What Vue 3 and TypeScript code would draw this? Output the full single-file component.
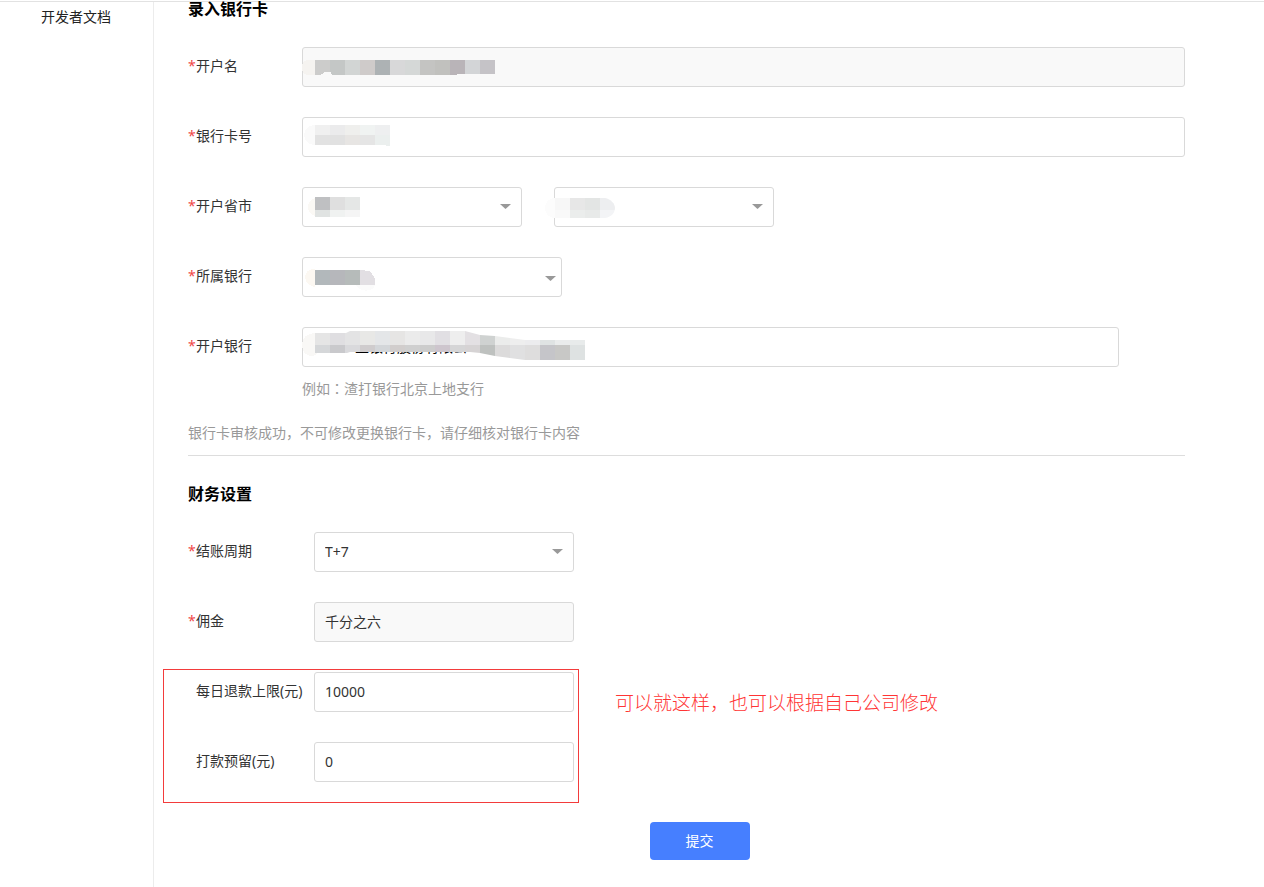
<script setup lang="ts">
import { ref } from 'vue'

interface Cell {
  x: number
  y: number
  w: number
  h: number
  fill: string
}

// Builds one row of 15px mosaic blocks.
function cells(x: number, y: number, h: number, fills: string[]): Cell[] {
  return fills.map((fill, i) => ({ x: x + i * 15, y, w: 15, h, fill }))
}

const holderMosaic = cells(13, 13, 15, [
  '#cccccb', '#c4c7c6', '#d2d5d4', '#cfcbca', '#adb2b4', '#d8d8d9',
  '#d5d8d7', '#c4c4c2', '#c1c1be', '#b9b4b8', '#d3d5d7', '#c5c3c7',
])
const cardMosaic = [
  ...cells(13, 8, 10, ['#f0f0f0', '#ebebec', '#efefed', '#f0f3f2', '#eeeff0']),
  ...cells(13, 18, 10, ['#e2e2e2', '#e1e1e1', '#e7e5e3', '#e5e5e5', '#ebefee']),
]
const provinceMosaic = [
  ...cells(13, 10, 13, ['#bfc0c2', '#dfdfdf', '#e5e7e6']),
  ...cells(13, 23, 7, ['#e0e3e2', '#f0f2f1', '#f5f5f5']),
]
const cityMosaic = [
  ...cells(1, 11, 12, ['#f7f7f7', '#e7e7e7', '#e3e5e4', '#edeef0']),
  ...cells(1, 23, 8, ['#f9f9f9', '#ebedec', '#e8eae9', '#f3f4f6']),
]
const bankMosaic = cells(13, 13, 15, ['#b2b8bb', '#b6b7bb', '#b6bbba'])
const branchMosaic = [
  ...cells(13, 4, 14, [
    '#e5e5e5', '#dfdee1', '#e3e3e4', '#e8e8e6', '#e4e6e8', '#e6e5e4',
    '#ebebeb', '#e8e8e9', '#e1dfe3', '#eeeeee', '#e3e0e3', '#cfd2d1',
    '#ebeceb', '#eeeeee', '#ececee', '#dfe3e3', '#eaecec', '#e8ebeb',
  ]),
  ...cells(13, 18, 15, [
    '#d5d7d9', '#c9c9cc', '#d9d9dc', '#cfcccd', '#d3d6d9', '#d1cdcc',
    '#cfcfcf', '#cccccc', '#cdc5cd', '#d5d5d6', '#d6d3d4', '#bec1bf',
    '#dcdbdb', '#e0e0e1', '#dedddd', '#c5c5c9', '#c8c8c6', '#dee2e2',
  ]),
]

const holder = ref('')
const cardNumber = ref('')
const province = ref('')
const city = ref('')
const bank = ref('')
const branch = ref('生银行股份有限公')
const cycle = ref('T+7')
const commission = ref('千分之六')
const refundLimit = ref('10000')
const reserve = ref('0')
</script>

<template>
  <div class="page">
    <header class="topline"></header>
    <div class="body">
      <nav class="sidebar">
        <a class="nav-link" href="#">开发者文档</a>
      </nav>
      <main class="main">
        <form @submit.prevent>
          <section class="bank-section">
            <h2 class="title">录入银行卡</h2>

            <div class="row">
              <label class="label" for="holder"><span class="star">*</span>开户名</label>
              <div class="field grow">
                <input id="holder" v-model="holder" class="control muted" type="text" readonly />
                <svg class="mosaic" width="200" height="40" aria-hidden="true">
                  <path d="M13 13H6C2 13 0 16 0 20.500S2 28 6 28H13Z" fill="#f5f3f0" />
                  <rect v-for="(c, i) in holderMosaic" :key="i" :x="c.x" :y="c.y" :width="c.w" :height="c.h" :fill="c.fill" />
                  <path d="M18 28L20 27L23 25H29L30 28ZM155 27H193V28H155Z" fill="#f9f9f9" />
                </svg>
              </div>
            </div>

            <div class="row">
              <label class="label" for="card"><span class="star">*</span>银行卡号</label>
              <div class="field grow">
                <input id="card" v-model="cardNumber" class="control" type="text" />
                <svg class="mosaic" width="200" height="40" aria-hidden="true">
                  <path d="M13 8C7 8 2 12 2 18S7 28 13 28Z" fill="#fafafa" />
                  <rect v-for="(c, i) in cardMosaic" :key="i" :x="c.x" :y="c.y" :width="c.w" :height="c.h" :fill="c.fill" />
                  <path d="M83 28H88V29H85Z" fill="#ebefee" />
                </svg>
              </div>
            </div>

            <div class="row">
              <label class="label" for="province"><span class="star">*</span>开户省市</label>
              <div class="pair">
                <div class="field narrow">
                  <select id="province" v-model="province" class="control"><option value=""></option></select>
                  <svg class="arrow" width="11" height="5" viewBox="0 0 11 5" aria-hidden="true"><path d="M0 0H11L5.500 5Z" /></svg>
                  <svg class="mosaic" width="200" height="40" aria-hidden="true">
                    <path d="M13 11C8 13 6 16 6 20S8 28 13 29Z" fill="#fbf9f5" />
                    <rect v-for="(c, i) in provinceMosaic" :key="i" :x="c.x" :y="c.y" :width="c.w" :height="c.h" :fill="c.fill" />
                  </svg>
                </div>
                <div class="field narrow">
                  <select id="city" v-model="city" class="control" aria-label="开户城市"><option value=""></option></select>
                  <svg class="arrow" width="11" height="5" viewBox="0 0 11 5" aria-hidden="true"><path d="M0 0H11L5.500 5Z" /></svg>
                  <svg class="mosaic" width="200" height="40" aria-hidden="true">
                    <defs>
                      <clipPath id="city-clip"><path d="M0 11H51C57 12 61 17 61 21S58 30 51 31H0Z" /></clipPath>
                    </defs>
                    <path d="M1 11C-5 11-9 15-9 21S-5 31 1 31Z" fill="#fcfcfc" />
                    <g clip-path="url(#city-clip)">
                      <rect x="0" y="11" width="1" height="20" fill="#fcfcfc" />
                      <rect v-for="(c, i) in cityMosaic" :key="i" :x="c.x" :y="c.y" :width="c.w" :height="c.h" :fill="c.fill" />
                    </g>
                  </svg>
                </div>
              </div>
            </div>

            <div class="row">
              <label class="label" for="bank"><span class="star">*</span>所属银行</label>
              <div class="field medium">
                <select id="bank" v-model="bank" class="control"><option value=""></option></select>
                <svg class="arrow edge" width="11" height="5" viewBox="0 0 11 5" aria-hidden="true"><path d="M0 0H11L5.500 5Z" /></svg>
                <svg class="mosaic" width="200" height="40" aria-hidden="true">
                  <path d="M13 12C7 12 3 15 3 20S7 29 13 30Z" fill="#fcf8f2" />
                  <path d="M54 28C58 36 72 35 73 28Z" fill="#fbfbfb" />
                  <path d="M58 13H62L63 14H67C71 17 73 21 73 24V28H58Z" fill="#e2dfe3" />
                  <rect v-for="(c, i) in bankMosaic" :key="i" :x="c.x" :y="c.y" :width="c.w" :height="c.h" :fill="c.fill" />
                </svg>
              </div>
            </div>

            <div class="row branch-row">
              <label class="label" for="branch"><span class="star">*</span>开户银行</label>
              <div class="branch">
                <div class="field">
                  <input id="branch" v-model="branch" class="control branch-input" type="text" />
                  <svg class="mosaic" width="300" height="40" aria-hidden="true">
                    <defs>
                      <clipPath id="branch-clip">
                        <path d="M13 6H44L48 4H163L178 8L193 9L223 13H283V33H223L193 29L178 26L168 25H48L45 26H13Z" />
                      </clipPath>
                    </defs>
                    <path d="M13 6C5 6 0 11 0 18S4 29 10 29L13 28L15 26H13Z" fill="#f9f8f6" />
                    <g clip-path="url(#branch-clip)">
                      <rect v-for="(c, i) in branchMosaic" :key="i" :x="c.x" :y="c.y" :width="c.w" :height="c.h" :fill="c.fill" />
                    </g>
                  </svg>
                </div>
                <p class="hint">例如<span class="punct">：</span>渣打银行北京上地支行</p>
              </div>
            </div>

            <p class="notice">银行卡审核成功，不可修改更换银行卡，请仔细核对银行卡内容</p>
          </section>

          <section class="finance-section">
            <h2 class="title">财务设置</h2>

            <div class="row">
              <label class="label" for="cycle"><span class="star">*</span>结账周期</label>
              <div class="field medium">
                <select id="cycle" v-model="cycle" class="control"><option>T+7</option></select>
                <svg class="arrow" width="11" height="5" viewBox="0 0 11 5" aria-hidden="true"><path d="M0 0H11L5.500 5Z" /></svg>
              </div>
            </div>

            <div class="row">
              <label class="label" for="commission"><span class="star">*</span>佣金</label>
              <div class="field medium">
                <input id="commission" v-model="commission" class="control muted" type="text" readonly />
              </div>
            </div>

            <div class="limits">
              <div class="row">
                <label class="label optional" for="limit">每日退款上限(元)</label>
                <div class="field medium">
                  <input id="limit" v-model="refundLimit" class="control" type="text" />
                </div>
              </div>
              <div class="row">
                <label class="label optional" for="reserve">打款预留(元)</label>
                <div class="field medium">
                  <input id="reserve" v-model="reserve" class="control" type="text" />
                </div>
              </div>
              <div class="mark"></div>
              <p class="remark">可以就这样，也可以根据自己公司修改</p>
            </div>
          </section>

          <div class="actions">
            <button class="submit" type="submit">提交</button>
          </div>
        </form>
      </main>
    </div>
  </div>
</template>

<style>
body {
  margin: 0;
  background: #fff;
}
</style>

<style scoped>
.page {
  display: flex;
  flex-direction: column;
  min-height: 100vh;
  box-sizing: border-box;
  font-family: "Noto Sans", "Noto Sans CJK SC", sans-serif;
  font-size: 14px;
  line-height: 20px;
  color: #333;
}

.topline {
  height: 1px;
  border-bottom: 1px solid #e2e2e2;
}

.body {
  display: flex;
  flex: 1;
}

.sidebar {
  flex: none;
  width: 153px;
  padding-top: 5px;
  box-sizing: border-box;
}

.nav-link {
  display: block;
  padding-left: 41px;
  color: #222;
  text-decoration: none;
}

.main {
  flex: 1;
  min-width: 0;
  padding: 0 79px 26px 34px;
  border-left: 1px solid #ececec;
}

.title {
  margin: 0 0 31px;
  font-size: 16px;
  line-height: 14px;
  font-weight: 700;
  color: #000;
}

.bank-section {
  border-bottom: 1px solid #ddd;
  padding-bottom: 12px;
  margin-bottom: 31px;
}

.row {
  display: flex;
  align-items: flex-start;
  margin-bottom: 30px;
}

.label {
  flex: none;
  width: 114px;
  line-height: 38px;
  white-space: nowrap;
}

.finance-section .label {
  width: 126px;
  box-sizing: border-box;
}

.label.optional {
  padding-left: 8px;
}

.star {
  display: inline-block;
  width: 8px;
  color: #f04848;
}

.field {
  position: relative;
  height: 40px;
}

.grow {
  flex: 1;
}

.narrow {
  width: 220px;
}

.medium {
  width: 260px;
}

.pair {
  display: flex;
  gap: 32px;
}

.control {
  display: block;
  width: 100%;
  height: 40px;
  box-sizing: border-box;
  margin: 0;
  padding: 0 10px;
  border: 1px solid #d9d9d9;
  border-radius: 3px;
  background: #fff;
  font: inherit;
  color: #333;
  appearance: none;
  outline: none;
}

input.control {
  padding-bottom: 2px;
}

.control.muted {
  background: #f9f9f9;
}

.arrow {
  position: absolute;
  top: 17px;
  right: 11px;
  fill: #999;
  pointer-events: none;
}

.arrow.edge {
  top: 19px;
  right: 6px;
}

.mosaic {
  position: absolute;
  top: 0;
  left: 0;
  overflow: visible;
  pointer-events: none;
  shape-rendering: crispEdges;
}

.branch-row {
  margin-bottom: 24px;
}

.branch {
  flex: 1;
  margin-right: 66px;
}

.branch-input {
  padding-left: 52px;
  color: #000;
}

.hint,
.notice {
  margin: 0;
  color: #999;
}

.hint {
  margin-top: 12px;
}

.punct {
  font-family: "Noto Sans CJK TC", sans-serif;
  line-height: 1;
}

.limits {
  position: relative;
  margin-bottom: 40px;
}

.limits .row:nth-child(2) {
  margin-bottom: 0;
}

.mark {
  position: absolute;
  top: -3px;
  bottom: -21px;
  left: -25px;
  width: 416px;
  box-sizing: border-box;
  border: 1px solid #f33b3b;
  pointer-events: none;
}

.remark {
  position: absolute;
  top: 18px;
  left: 427px;
  margin: 0;
  font-family: "Noto Sans CJK SC", sans-serif;
  font-size: 19px;
  line-height: 24px;
  font-weight: 300;
  white-space: nowrap;
  color: #ff3535;
}

.actions {
  display: flex;
  justify-content: center;
  padding-left: 26px;
}

.submit {
  width: 100px;
  height: 38px;
  padding: 0;
  border: 0;
  border-radius: 4px;
  background: #467fff;
  font: inherit;
  color: #fff;
  cursor: pointer;
}
</style>
